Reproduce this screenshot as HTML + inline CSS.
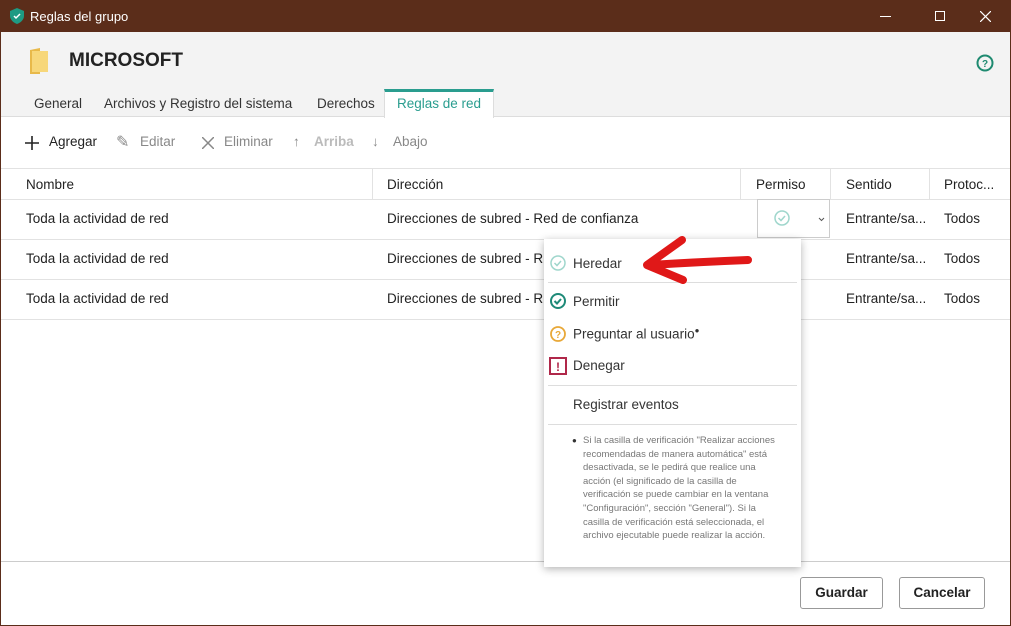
<!DOCTYPE html>
<html><head><meta charset="utf-8"><style>
*{box-sizing:border-box;margin:0;padding:0}
body{width:1011px;height:626px;position:relative;overflow:hidden;font-family:"Liberation Sans",sans-serif;font-size:13.5px;color:#222;background:#fff}
.a{position:absolute;white-space:nowrap}
.tb{left:0;top:0;width:1011px;height:32px;background:#5b2d1a}
.frame{left:0;top:32px;width:1011px;height:594px;border:1px solid #5b2d1a;border-top:none}
.hdr{left:1px;top:32px;width:1009px;height:85px;background:#f3f3f3;border-bottom:1px solid #ddd}
.tab{top:96px;color:#333}
.tool{top:134px;color:#888}
.th{top:177px;color:#222}
.hl{height:1px;background:#e2e2e2;left:1px;width:1009px}
.vl{width:1px;background:#e2e2e2;top:168px;height:31px}
.cell{color:#222}
.pop{left:544px;top:239px;width:257px;height:328px;background:#fff;box-shadow:0 2px 8px rgba(0,0,0,.3)}
.mi{color:#333}
.btn{top:577px;height:32px;border:1px solid #999;border-radius:3px;background:#fff;font-weight:bold;text-align:center;line-height:30px}
</style></head><body>
<div class="a tb"></div>
<svg class="a" style="left:10px;top:8px" width="14" height="16" viewBox="0 0 14 16"><path d="M7 0L14 3V8C14 12 10 15 7 16C4 15 0 12 0 8V3Z" fill="#1e9a83"/><path d="M4 8l2 2 4-4" stroke="#fff" stroke-width="1.5" fill="none"/></svg>
<div class="a" style="left:30px;top:9px;color:#fff;font-size:13px">Reglas del grupo</div>
<div class="a" style="left:880px;top:16px;width:11px;height:1px;background:#fff"></div>
<div class="a" style="left:935px;top:11px;width:10px;height:10px;border:1px solid #fff"></div>
<svg class="a" style="left:980px;top:11px" width="11" height="11" viewBox="0 0 11 11"><path d="M0 0L11 11M11 0L0 11" stroke="#fff" stroke-width="1.2"/></svg>
<div class="a frame"></div>
<div class="a hdr"></div>
<svg class="a" style="left:28px;top:46px" width="22" height="30" viewBox="0 0 22 30"><path d="M2 4L12 2V28L2 28Z" fill="#e8b94a"/><path d="M4 5H20V26H4Z" fill="#f7d77a"/></svg>
<div class="a" style="left:69px;top:50px;font-size:19px;font-weight:bold;color:#222">MICROSOFT</div>
<svg class="a" style="left:976px;top:54px" width="18" height="18" viewBox="0 0 18 18"><circle cx="9" cy="9" r="7.5" stroke="#1e8a70" stroke-width="2" fill="none"/><text x="9" y="13" font-size="10" font-weight="bold" text-anchor="middle" fill="#1e8a70" font-family="Liberation Sans">?</text></svg>
<div class="a" style="left:384px;top:89px;width:110px;height:29px;background:#fff;border-top:3px solid #2a9d8f;border-left:1px solid #ddd;border-right:1px solid #ddd"></div>
<div class="a tab" style="left:34px">General</div>
<div class="a tab" style="left:104px">Archivos y Registro del sistema</div>
<div class="a tab" style="left:317px">Derechos</div>
<div class="a tab" style="left:397px;color:#2a9d8f">Reglas de red</div>
<svg class="a" style="left:25px;top:136px" width="14" height="14" viewBox="0 0 14 14"><path d="M7 0V14M0 7H14" stroke="#222" stroke-width="1.6"/></svg>
<div class="a tool" style="left:49px;color:#222">Agregar</div>
<div class="a tool" style="left:116px;font-size:16px;top:132px">✎</div>
<div class="a tool" style="left:140px">Editar</div>
<svg class="a" style="left:202px;top:137px" width="12" height="12" viewBox="0 0 12 12"><path d="M0 0L12 12M12 0L0 12" stroke="#888" stroke-width="1.5"/></svg>
<div class="a tool" style="left:224px">Eliminar</div>
<div class="a tool" style="left:293px">↑</div>
<div class="a tool" style="left:314px;color:#bbb;font-weight:bold">Arriba</div>
<div class="a tool" style="left:372px">↓</div>
<div class="a tool" style="left:393px">Abajo</div>
<div class="a hl" style="top:168px"></div>
<div class="a vl" style="left:372px"></div><div class="a vl" style="left:740px"></div><div class="a vl" style="left:830px"></div><div class="a vl" style="left:929px"></div>
<div class="a th" style="left:26px">Nombre</div>
<div class="a th" style="left:387px">Dirección</div>
<div class="a th" style="left:756px">Permiso</div>
<div class="a th" style="left:846px">Sentido</div>
<div class="a th" style="left:944px">Protoc...</div>
<div class="a hl" style="top:199px"></div>
<div class="a hl" style="top:239px"></div>
<div class="a hl" style="top:279px"></div>
<div class="a hl" style="top:319px"></div>
<div class="a cell" style="left:26px;top:211px">Toda la actividad de red</div>
<div class="a cell" style="left:387px;top:211px">Direcciones de subred - Red de confianza</div>
<div class="a" style="left:757px;top:199px;width:73px;height:39px;border:1px solid #ccc;background:#fff"></div>
<svg class="a" style="left:773px;top:209px" width="18" height="18" viewBox="0 0 18 18"><circle cx="9" cy="9" r="7" stroke="#9fd6cc" stroke-width="1.5" fill="none"/><path d="M5.5 9l2.5 2.5 4-4.5" stroke="#9fd6cc" stroke-width="1.5" fill="none"/></svg>
<svg class="a" style="left:818px;top:217px" width="7" height="5" viewBox="0 0 7 5"><path d="M1 1L3.5 3.5L6 1" stroke="#555" fill="none"/></svg>
<div class="a cell" style="left:846px;top:211px">Entrante/sa...</div>
<div class="a cell" style="left:944px;top:211px">Todos</div>
<div class="a cell" style="left:26px;top:251px">Toda la actividad de red</div>
<div class="a cell" style="left:387px;top:251px">Direcciones de subred - R</div>
<div class="a cell" style="left:846px;top:251px">Entrante/sa...</div>
<div class="a cell" style="left:944px;top:251px">Todos</div>
<div class="a cell" style="left:26px;top:291px">Toda la actividad de red</div>
<div class="a cell" style="left:387px;top:291px">Direcciones de subred - R</div>
<div class="a cell" style="left:846px;top:291px">Entrante/sa...</div>
<div class="a cell" style="left:944px;top:291px">Todos</div>
<div class="a hl" style="top:561px;background:#ccc"></div>
<div class="a btn" style="left:800px;width:83px">Guardar</div>
<div class="a btn" style="left:899px;width:86px">Cancelar</div>
<div class="a pop"></div>
<svg class="a" style="left:549px;top:254px" width="18" height="18" viewBox="0 0 18 18"><circle cx="9" cy="9" r="7" stroke="#9fd6cc" stroke-width="1.5" fill="none"/><path d="M5.5 9l2.5 2.5 4-4.5" stroke="#9fd6cc" stroke-width="1.5" fill="none"/></svg>
<div class="a mi" style="left:573px;top:256px">Heredar</div>
<div class="a" style="left:548px;top:282px;width:249px;height:1px;background:#ddd"></div>
<svg class="a" style="left:549px;top:292px" width="18" height="18" viewBox="0 0 18 18"><circle cx="9" cy="9" r="7" stroke="#1e8a78" stroke-width="2" fill="none"/><path d="M5.5 9l2.5 2.5 4-4.5" stroke="#1e8a78" stroke-width="2" fill="none"/></svg>
<div class="a mi" style="left:573px;top:294px">Permitir</div>
<svg class="a" style="left:549px;top:325px" width="18" height="18" viewBox="0 0 18 18"><circle cx="9" cy="9" r="7" stroke="#e8a838" stroke-width="1.8" fill="none"/><text x="9" y="13" font-size="10" font-weight="bold" text-anchor="middle" fill="#e8a838" font-family="Liberation Sans">?</text></svg>
<div class="a mi" style="left:573px;top:326px">Preguntar al usuario<sup style="font-size:8px">●</sup></div>
<svg class="a" style="left:549px;top:357px" width="18" height="18" viewBox="0 0 18 18"><rect x="1" y="1" width="16" height="16" stroke="#b0284a" stroke-width="2" fill="none"/><text x="9" y="14" font-size="12" font-weight="bold" text-anchor="middle" fill="#b0284a" font-family="Liberation Sans">!</text></svg>
<div class="a mi" style="left:573px;top:358px">Denegar</div>
<div class="a" style="left:548px;top:385px;width:249px;height:1px;background:#ddd"></div>
<div class="a mi" style="left:573px;top:397px">Registrar eventos</div>
<div class="a" style="left:548px;top:424px;width:249px;height:1px;background:#ddd"></div>
<div class="a" style="left:583px;top:434px;width:196px;white-space:normal;font-size:9.5px;line-height:13.6px;color:#777"><span style="position:absolute;left:-11px;top:0;color:#333;font-size:8px">●</span>Si la casilla de verificación "Realizar acciones recomendadas de manera automática" está desactivada, se le pedirá que realice una acción (el significado de la casilla de verificación se puede cambiar en la ventana "Configuración", sección "General"). Si la casilla de verificación está seleccionada, el archivo ejecutable puede realizar la acción.</div>
<svg class="a" style="left:638px;top:232px" width="120" height="55" viewBox="0 0 120 55"><path d="M44 8L9 33L45 48M12 33Q60 30 110 28" stroke="#e01818" stroke-width="8" fill="none" stroke-linecap="round" stroke-linejoin="round"/></svg>
</body></html>
